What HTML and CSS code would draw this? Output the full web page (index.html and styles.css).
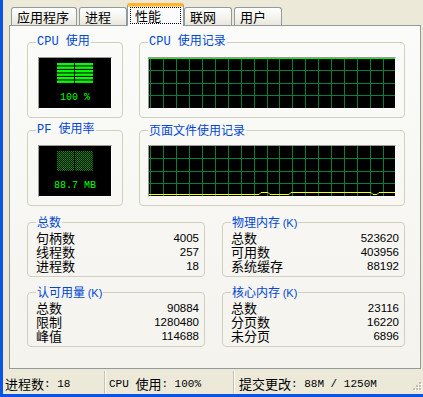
FILE: index.html
```html
<!DOCTYPE html>
<html lang="zh-CN">
<head>
    <meta charset="UTF-8">
    <title>Windows 任务管理器 - 性能</title>
    <link rel="stylesheet" href="styles.css">
</head>
<body>
    <div class="window">
        <!-- Tab strip -->
        <div class="tabs">
            <div class="tab">应用程序</div>
            <div class="tab">进程</div>
            <div class="tab active"><span class="focus">性能</span></div>
            <div class="tab">联网</div>
            <div class="tab">用户</div>
        </div>

        <!-- Performance page -->
        <div class="page">
            <div class="grid grid-top">
                <fieldset class="group">
                    <legend class="mono">CPU 使用</legend>
                    <div class="meter">
                        <svg class="bars" width="37" height="20" viewBox="0 0 37 20">
                            <g fill="#00ff00">
                                <rect x="0" y="0" width="17" height="2.4"/><rect x="18" y="0" width="18" height="2.4"/>
                                <rect x="0" y="3.5" width="17" height="2.4"/><rect x="18" y="3.5" width="18" height="2.4"/>
                                <rect x="0" y="7" width="17" height="2.4"/><rect x="18" y="7" width="18" height="2.4"/>
                                <rect x="0" y="10.5" width="17" height="2.4"/><rect x="18" y="10.5" width="18" height="2.4"/>
                                <rect x="0" y="14" width="17" height="2.4"/><rect x="18" y="14" width="18" height="2.4"/>
                                <rect x="0" y="17.5" width="17" height="2.4"/><rect x="18" y="17.5" width="18" height="2.4"/>
                            </g>
                        </svg>
                        <div class="meter-text">100 %</div>
                    </div>
                </fieldset>

                <fieldset class="group">
                    <legend class="mono">CPU 使用记录</legend>
                    <div class="graph">
                        <svg width="246" height="50" viewBox="0 0 246 50">
                            <path class="grid-lines" d="M0 12.5H246M0 25.5H246M0 37.5H246M1.5 0V50M14.5 0V50M27.5 0V50M40.5 0V50M53.5 0V50M66.5 0V50M79.5 0V50M92.5 0V50M105.5 0V50M118.5 0V50M130.5 0V50M143.5 0V50M156.5 0V50M169.5 0V50M182.5 0V50M195.5 0V50M208.5 0V50M221.5 0V50M234.5 0V50"/>
                            <path class="cpu-line" d="M0 0.5H246"/>
                        </svg>
                    </div>
                </fieldset>

                <fieldset class="group">
                    <legend class="mono">PF 使用率</legend>
                    <div class="meter">
                        <svg class="bars" width="37" height="20" viewBox="0 0 37 20">
                            <defs>
                                <pattern id="dim" width="2" height="2" patternUnits="userSpaceOnUse">
                                    <rect x="0" y="0" width="1" height="1" fill="#00a000"/>
                                    <rect x="1" y="1" width="1" height="1" fill="#007a00"/>
                                </pattern>
                            </defs>
                            <rect x="0" y="0" width="17" height="20" fill="url(#dim)"/>
                            <rect x="18" y="0" width="18" height="20" fill="url(#dim)"/>
                        </svg>
                        <div class="meter-text">88.7 MB</div>
                    </div>
                </fieldset>

                <fieldset class="group">
                    <legend>页面文件使用记录</legend>
                    <div class="graph">
                        <svg width="246" height="50" viewBox="0 0 246 50">
                            <path class="grid-lines" d="M0 12.5H246M0 25.5H246M0 37.5H246M1.5 0V50M14.5 0V50M27.5 0V50M40.5 0V50M53.5 0V50M66.5 0V50M79.5 0V50M92.5 0V50M105.5 0V50M118.5 0V50M130.5 0V50M143.5 0V50M156.5 0V50M169.5 0V50M182.5 0V50M195.5 0V50M208.5 0V50M221.5 0V50M234.5 0V50"/>
                            <polyline class="pf-line" points="0,48.5 110,48.5 112,46.5 119,46.5 121,48.5 140,48.5 142,46.5 222,46.5 224,48.5 228,48.5 230,46.5 246,46.5"/>
                        </svg>
                    </div>
                </fieldset>
            </div>

            <div class="grid grid-bottom">
                <fieldset class="group stats">
                    <legend>总数</legend>
                    <div class="row"><span>句柄数</span><span class="num">4005</span></div>
                    <div class="row"><span>线程数</span><span class="num">257</span></div>
                    <div class="row"><span>进程数</span><span class="num">18</span></div>
                </fieldset>

                <fieldset class="group stats">
                    <legend>物理内存 <span class="k">(K)</span></legend>
                    <div class="row"><span>总数</span><span class="num">523620</span></div>
                    <div class="row"><span>可用数</span><span class="num">403956</span></div>
                    <div class="row"><span>系统缓存</span><span class="num">88192</span></div>
                </fieldset>

                <fieldset class="group stats">
                    <legend>认可用量 <span class="k">(K)</span></legend>
                    <div class="row"><span>总数</span><span class="num">90884</span></div>
                    <div class="row"><span>限制</span><span class="num">1280480</span></div>
                    <div class="row"><span>峰值</span><span class="num">114688</span></div>
                </fieldset>

                <fieldset class="group stats">
                    <legend>核心内存 <span class="k">(K)</span></legend>
                    <div class="row"><span>总数</span><span class="num">23116</span></div>
                    <div class="row"><span>分页数</span><span class="num">16220</span></div>
                    <div class="row"><span>未分页</span><span class="num">6896</span></div>
                </fieldset>
            </div>
        </div>

        <!-- Status bar -->
        <div class="status">
            <div class="cell cell-procs"><span class="zh">进程数</span>: 18</div>
            <div class="cell cell-cpu">CPU <span class="zh">使用</span>: 100%</div>
            <div class="cell cell-commit"><span class="zh">提交更改</span>: 88M / 1250M</div>
            <svg class="grip" width="12" height="12" viewBox="0 0 12 12">
                <g fill="#fff"><rect x="10" y="2" width="2" height="2"/><rect x="7" y="5" width="2" height="2"/><rect x="10" y="5" width="2" height="2"/><rect x="4" y="8" width="2" height="2"/><rect x="7" y="8" width="2" height="2"/><rect x="10" y="8" width="2" height="2"/></g>
                <g fill="#c2bfb0"><rect x="9" y="1" width="2" height="2"/><rect x="6" y="4" width="2" height="2"/><rect x="9" y="4" width="2" height="2"/><rect x="3" y="7" width="2" height="2"/><rect x="6" y="7" width="2" height="2"/><rect x="9" y="7" width="2" height="2"/></g>
            </svg>
        </div>
    </div>
</body>
</html>
```

FILE: styles.css
```css
* {
    box-sizing: border-box;
}

body {
    margin: 0;
    background-color: #ece9d8;
    font-family: "Noto Sans CJK SC", sans-serif;
    font-size: 13px;
    color: #000;
}

.window {
    width: 423px;
    height: 397px;
    display: flex;
    flex-direction: column;
    border-left: 3px solid #0a55e5;
    border-bottom: 3px solid #0a55e5;
    overflow: hidden;
}

/* Tabs */
.tabs {
    display: flex;
    align-items: flex-end;
    gap: 2px;
    height: 25px;
    padding-left: 8px;
    position: relative;
    z-index: 1;
}

.tab {
    height: 18px;
    min-width: 48px;
    padding: 0 7px 0 5px;
    line-height: 17px;
    border: 1px solid #919b9c;
    border-bottom: none;
    border-radius: 3px 3px 0 0;
    background: linear-gradient(#ffffff, #f3f2ec 60%, #e8e6dc);
    white-space: nowrap;
}

.tab.active {
    height: 23px;
    width: 57px;
    margin: 0 -2px -1px;
    padding: 1px 2px 0;
    background: #fcfcfe;
    border-top: 3px solid #ffb52e;
    box-shadow: inset 0 1px 0 #ffd77a;
}

.focus {
    display: block;
    height: 17px;
    padding-left: 4px;
    line-height: 15px;
    border: 1px dotted #000;
}

/* Page */
.page {
    flex: 1;
    margin: 0 2px 0 6px;
    padding: 8px 0 0 17px;
    border: 1px solid #919b9c;
    background: linear-gradient(#fbfbf9, #f4f3ee);
}

.grid {
    display: grid;
}

.grid-top {
    grid-template-columns: 96px 266px;
    column-gap: 16px;
    row-gap: 4px;
}

.grid-bottom {
    grid-template-columns: 178px 183px;
    column-gap: 17px;
    row-gap: 7px;
    margin-top: 8px;
}

.group {
    margin: 0;
    min-width: 0;
    padding: 0 8px 8px;
    border: 1px solid #d0d0bf;
    border-radius: 4px;
}

.group legend {
    padding: 0 1px;
    height: 16px;
    line-height: 16px;
    font-size: 12px;
    color: #0046d5;
}

.mono {
    font-family: "Liberation Mono", "Noto Sans CJK SC", monospace;
}

.k {
    font-family: "Liberation Sans", sans-serif;
    font-size: 11px;
}

/* Meters */
.meter {
    width: 74px;
    height: 52px;
    margin: 7px auto 0;
    display: flex;
    flex-direction: column;
    align-items: center;
    background: #000;
    border: 1px solid;
    border-color: #9a9a90 #fff #fff #9a9a90;
}

.bars {
    display: block;
    margin-top: 5px;
}

.meter-text {
    margin-top: 9px;
    font-family: "Liberation Mono", monospace;
    font-size: 10px;
    line-height: 12px;
    color: #00ff00;
    white-space: pre;
}

/* History graphs */
.graph {
    height: 52px;
    margin-top: 7px;
    background: #000;
    border: 1px solid;
    border-color: #9a9a90 #fff #fff #9a9a90;
}

.graph svg {
    display: block;
}

.grid-lines {
    stroke: #008040;
    stroke-width: 1;
    fill: none;
}

.cpu-line {
    stroke: #00ff00;
    stroke-width: 1;
}

.pf-line {
    stroke: #ffff00;
    stroke-width: 1;
    fill: none;
}

/* Totals */
.stats {
    padding: 1px 5px 3px 8px;
}

.row {
    display: flex;
    justify-content: space-between;
    align-items: center;
    height: 14px;
    line-height: 14px;
}

.num {
    font-family: "Liberation Sans", sans-serif;
    font-size: 11.5px;
}

/* Status bar */
.status {
    height: 23px;
    margin-top: 2px;
    display: flex;
    align-items: stretch;
    font-family: "Liberation Mono", monospace;
    font-size: 11px;
    white-space: nowrap;
}

.zh {
    font-family: "Noto Sans CJK SC", sans-serif;
    font-size: 13px;
}

.cell {
    display: flex;
    align-items: center;
    padding-top: 2px;
    white-space: pre;
}

.cell-procs {
    width: 101px;
    padding-left: 2px;
}

.cell-cpu {
    width: 129px;
    padding-left: 4px;
    border-left: 1px solid #c5c2b2;
    box-shadow: inset 1px 0 #fff;
}

.cell-commit {
    flex: 1;
    padding-left: 5px;
    border-left: 1px solid #c5c2b2;
    box-shadow: inset 1px 0 #fff;
}

.grip {
    align-self: flex-end;
    margin: 0 1px 1px 0;
}
```
